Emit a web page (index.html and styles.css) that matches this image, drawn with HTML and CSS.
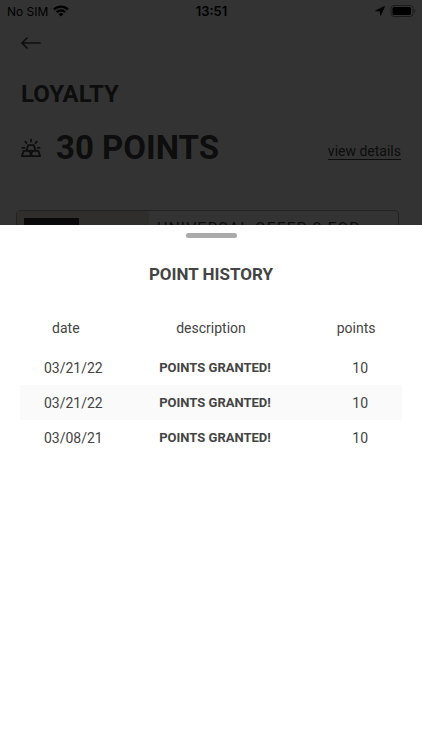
FILE: index.html
```html
<!DOCTYPE html>
<html lang="en">
<head>
  <meta charset="UTF-8" />
  <meta name="viewport" content="width=device-width, initial-scale=1" />
  <title>Loyalty</title>
  <link rel="stylesheet" href="styles.css">
</head>
<body>

  <!-- Status bar -->
  <header class="status-bar">
    <div class="carrier">
      <span>No SIM</span>
      <svg width="16" height="12" viewBox="0 0 16 12" fill="none" stroke="#000" stroke-width="2.2">
        <path d="M1 4.4a10 10 0 0 1 14 0" />
        <path d="M3.6 7.2a6.2 6.2 0 0 1 8.8 0" />
        <path d="M8 11.6 5.6 9.2a3.4 3.4 0 0 1 4.8 0z" fill="#000" stroke="none" />
      </svg>
    </div>
    <div class="clock">13:51</div>
    <div class="indicators">
      <svg width="10" height="10" viewBox="0 0 10 10"><path d="M9.700.3 5.600 9.500 4.900 5.100.4 4.800z" fill="#000" stroke="#000" stroke-width=".6" stroke-linejoin="round" /></svg>
      <svg width="26" height="12" viewBox="0 0 26 12">
        <rect x="1" y=".5" width="22" height="11" rx="3" fill="none" stroke="#888" />
        <rect x="2.500" y="2" width="18.500" height="8" rx="1.5" fill="#000" />
        <path d="M24.3 4v4q1.2-.6 1.2-2t-1.2-2z" fill="#888" />
      </svg>
    </div>
  </header>

  <!-- Loyalty page -->
  <main class="page">
    <button class="back" type="button" aria-label="Back">
      <svg width="20" height="14" viewBox="0 0 20 14" fill="none" stroke="#444" stroke-width="1.7" stroke-linecap="round" stroke-linejoin="round">
        <path d="M19 7H1M6 2 1 7l5 5" />
      </svg>
    </button>

    <h1 class="page-title">LOYALTY</h1>

    <div class="balance">
      <svg width="20" height="20" viewBox="0 0 20 20" fill="none" stroke="#444" stroke-width="1.8" stroke-linejoin="round">
        <path d="M10 .8v3.400M3.800 3l2.200 2.600M16.200 3 14 5.600M.600 9.800h3.600M15.800 9.800h3.600" />
        <path d="M5.600 12.600 7.100 7.200h5.800l1.500 5.400" />
        <path d="M2.600 12.800H8.200L11.400 18.200H.900zM17.400 12.800H11.800L8.600 18.200H19.100z" />
        <path d="M8.200 12.800h3.600" />
      </svg>
      <span class="balance-value">30 POINTS</span>
      <a class="details-link" href="#history">view details</a>
    </div>

    <article class="offer">
      <div class="offer-image"></div>
      <h2 class="offer-title">UNIVERSAL OFFER 2 FOR</h2>
    </article>
  </main>

  <div class="backdrop"></div>

  <!-- Bottom sheet -->
  <section class="sheet" id="history">
    <div class="handle"></div>
    <h2 class="sheet-title">POINT HISTORY</h2>
    <table class="history">
      <thead>
        <tr><th>date</th><th class="wide">description</th><th>points</th></tr>
      </thead>
      <tbody>
        <tr><td class="date">03/21/22</td><td class="event">POINTS GRANTED!</td><td>10</td></tr>
        <tr><td class="date">03/21/22</td><td class="event">POINTS GRANTED!</td><td>10</td></tr>
        <tr><td class="date">03/08/21</td><td class="event">POINTS GRANTED!</td><td>10</td></tr>
      </tbody>
    </table>
  </section>

</body>
</html>
```
FILE: styles.css
```css
* {
  box-sizing: border-box;
}

body {
  margin: 0;
  height: 100vh;
  overflow: hidden;
  background: #fff;
  color: #444;
  font-family: Roboto, "Liberation Sans", sans-serif;
  font-size: 14px;
}

h1,
h2 {
  margin: 0;
}

/* Status bar */
.status-bar {
  display: grid;
  grid-template-columns: 1fr auto 1fr;
  align-items: center;
  height: 22px;
  padding: 0 6px 0 7px;
  color: #000;
  font-family: Inter, "Liberation Sans", sans-serif;
  font-size: 12px;
}

.carrier,
.indicators {
  display: flex;
  align-items: center;
  gap: 5px;
}

.indicators {
  justify-content: flex-end;
}

.clock {
  font-size: 13px;
  font-weight: 600;
}

/* Page */
.page {
  padding: 14px 21px;
}

.back {
  display: block;
  padding: 0;
  border: 0;
  background: none;
}

.back svg {
  display: block;
}

.page-title {
  margin-top: 29px;
  font-size: 24px;
  line-height: 30px;
}

.balance {
  display: flex;
  align-items: center;
  margin-top: 18px;
}

.balance-value {
  margin-left: 15px;
  font-size: 33px;
  font-weight: 700;
  line-height: 42px;
}

.details-link {
  margin-left: auto;
  padding-top: 6px;
  color: #444;
  font-size: 14px;
  text-underline-offset: 3px;
}

.offer {
  display: flex;
  height: 120px;
  margin: 41px 2px 0 -5px;
  overflow: hidden;
  border: 1px solid #aaa;
  border-radius: 4px;
}

.offer-image {
  width: 132px;
  padding: 7px;
  background: #eee2e2;
}

.offer-image::before {
  content: "";
  display: block;
  width: 55px;
  height: 60px;
  background: #333;
}

.offer-title {
  padding: 8px;
  font-size: 16px;
  font-weight: 400;
  letter-spacing: 1px;
}

/* Bottom sheet */
.backdrop {
  position: fixed;
  inset: 0;
  background: rgba(0, 0, 0, 0.8);
}

.sheet {
  position: fixed;
  inset: 30% 0 0;
  padding: 8px 20px;
  background: #fff;
}

.handle {
  width: 51px;
  height: 5px;
  margin: 0 auto;
  border-radius: 3px;
  background: #aaa;
}

.sheet-title {
  margin-top: 24px;
  font-size: 17px;
  line-height: 24px;
  text-align: center;
}

.history {
  width: 100%;
  margin-top: 22px;
  border-collapse: collapse;
  table-layout: fixed;
  text-align: center;
}

.history th {
  height: 42px;
  padding: 0 0 2px;
  font-weight: 400;
}

.history .wide {
  width: 52%;
}

.history td {
  height: 35px;
  padding: 0 0 0 8px;
}

.history .date {
  padding-left: 15px;
}

.history .event {
  font-size: 13px;
  font-weight: 700;
}

.history tbody tr:nth-child(even) {
  background: #fafafa;
}
```
